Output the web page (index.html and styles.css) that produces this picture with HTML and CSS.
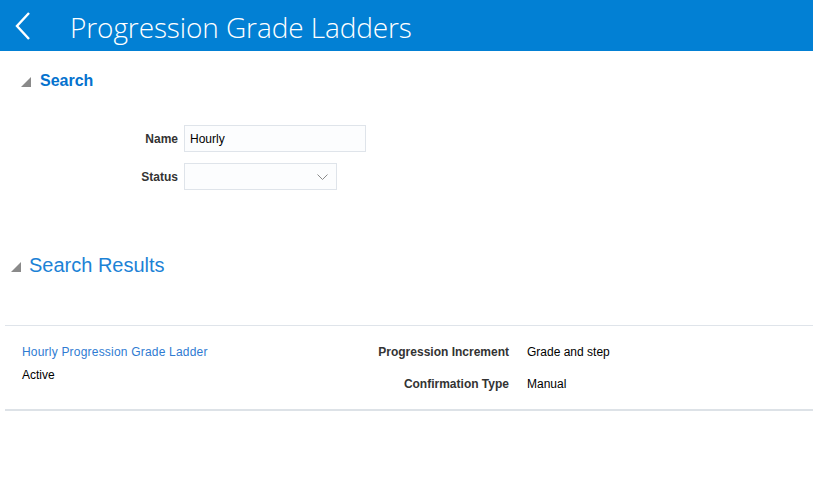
FILE: index.html
```html
<!DOCTYPE html>
<html lang="en">
<head>
  <meta charset="UTF-8">
  <title>Progression Grade Ladders</title>
  <link rel="stylesheet" href="styles.css">
</head>
<body>
  <!-- Header -->
  <header class="page-header">
    <a class="back" href="#">
      <svg width="16" height="28" viewBox="0 0 16 28"><polyline points="14,1 2,14 14,27" fill="none" stroke="#fff" stroke-width="2.4"/></svg>
    </a>
    <h1>Progression Grade Ladders</h1>
  </header>

  <!-- Search -->
  <section class="search">
    <h2 class="search-title">
      <svg class="disclosure" width="10" height="10" viewBox="0 0 10 10"><polygon points="10,0 10,10 0,10" fill="#8a8a8a"/></svg>
      Search
    </h2>
    <div class="search-form">
      <label for="name">Name</label>
      <input id="name" class="field name-field" type="text" value="Hourly">
      <label for="status">Status</label>
      <div id="status" class="field status-field">
        <svg width="11" height="6" viewBox="0 0 11 6"><polyline points="0.5,0.5 5.5,5.5 10.5,0.5" fill="none" stroke="#8a8a8a" stroke-width="1"/></svg>
      </div>
    </div>
  </section>

  <!-- Search Results -->
  <section class="results">
    <h2 class="results-title">
      <svg class="disclosure" width="10" height="10" viewBox="0 0 10 10"><polygon points="10,0 10,10 0,10" fill="#8a8a8a"/></svg>
      Search Results
    </h2>
    <div class="result-list">
      <div class="result-row">
        <div class="result-main">
          <a href="#">Hourly Progression Grade Ladder</a>
          <span>Active</span>
        </div>
        <div class="result-attrs">
          <span class="attr-label">Progression Increment</span>
          <span>Grade and step</span>
          <span class="attr-label">Confirmation Type</span>
          <span>Manual</span>
        </div>
      </div>
    </div>
  </section>
</body>
</html>
```

FILE: styles.css
```css
* {
  margin: 0;
  padding: 0;
  box-sizing: border-box;
}

body {
  font-family: "Liberation Sans", Arial, sans-serif;
  font-size: 12px;
  color: #000;
  background: #fff;
}

a {
  text-decoration: none;
  color: inherit;
}

/* Header */
.page-header {
  height: 51px;
  background: #0280d4;
  display: flex;
  align-items: center;
  padding-left: 15px;
}

.page-header .back {
  display: flex;
  width: 55px;
}

.page-header h1 {
  font-family: "Open Sans", sans-serif;
  font-weight: 300;
  font-size: 28px;
  color: #fff;
  letter-spacing: -0.1px;
  margin-top: 2px;
}

/* Search */
.search {
  padding: 20px 0 0 21px;
}

.search-title {
  display: flex;
  align-items: center;
  gap: 9px;
  font-size: 16px;
  line-height: 20px;
  font-weight: bold;
  color: #0572ce;
}

.search-title .disclosure {
  margin-top: 2px;
}

.search-form {
  display: grid;
  grid-template-columns: 157px max-content;
  column-gap: 6px;
  row-gap: 11px;
  align-items: center;
  margin-top: 34px;
}

.search-form label {
  text-align: right;
  font-weight: bold;
  color: #333;
}

.field {
  height: 27px;
  background: #fcfdfe;
  border: 1px solid #dfe4ea;
  font-family: "Liberation Sans", Arial, sans-serif;
  font-size: 12px;
  color: #000;
}

.name-field {
  width: 182px;
  padding-left: 5px;
  outline: none;
}

.status-field {
  width: 153px;
  display: flex;
  align-items: center;
  justify-content: flex-end;
  padding-right: 8px;
}

/* Search Results */
.results {
  margin-top: 63px;
}

.results-title {
  display: flex;
  align-items: center;
  gap: 8px;
  padding-left: 11px;
  font-size: 20px;
  line-height: 24px;
  font-weight: normal;
  color: #1c82d6;
}

.results-title .disclosure {
  margin-top: 3px;
}

.result-list {
  margin: 48px 0 0 5px;
  border-top: 1px solid #dfe4ea;
  border-bottom: 2px solid #dde2e7;
}

.result-row {
  display: flex;
  padding: 18px 0 17px 17px;
  line-height: 16px;
}

.result-main {
  width: 200px;
  display: flex;
  flex-direction: column;
  gap: 7px;
}

.result-main a {
  color: #2f7bd2;
  letter-spacing: 0.2px;
}

.result-attrs {
  display: grid;
  grid-template-columns: 287px max-content;
  column-gap: 18px;
  row-gap: 16px;
}

.attr-label {
  text-align: right;
  font-weight: bold;
  color: #333;
}
```
